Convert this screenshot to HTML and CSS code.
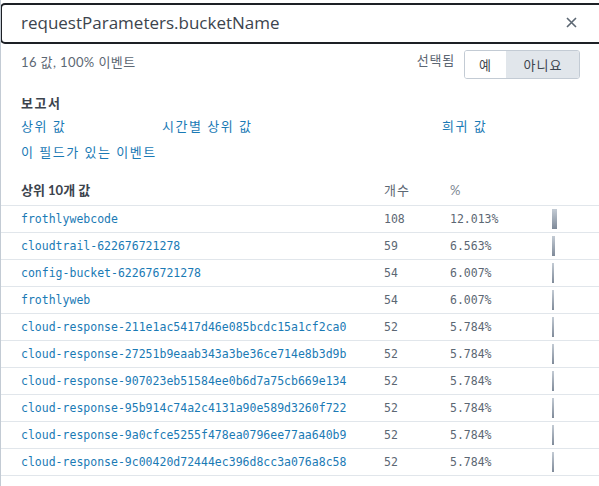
FILE: index.html
```html
<!DOCTYPE html>
<html lang="ko">
<head>
<meta charset="utf-8">
<title>requestParameters.bucketName</title>
<link rel="stylesheet" href="styles.css">
</head>
<body>
<div class="panel">
  <header class="title-bar">
    <h1 class="title">requestParameters.bucketName</h1>
    <span class="close" aria-label="닫기">
      <svg width="11" height="11" viewBox="0 0 11 11"><path d="M1 1L10 10M10 1L1 10" stroke="#5c6773" stroke-width="1.6" fill="none"/></svg>
    </span>
  </header>
  <div class="body">
    <div class="summary-row">
      <span class="stats">16 값, 100% 이벤트</span>
      <div class="selected">
        <span class="selected-label">선택됨</span>
        <div class="toggle">
          <span class="toggle-btn">예</span>
          <span class="toggle-btn active">아니요</span>
        </div>
      </div>
    </div>
    <section class="reports">
      <h2 class="reports-title">보고서</h2>
      <div class="report-links">
        <a class="link">상위 값</a>
        <a class="link">시간별 상위 값</a>
        <a class="link">희귀 값</a>
        <a class="link">이 필드가 있는 이벤트</a>
      </div>
    </section>
  </div>
  <table class="values">
    <thead>
      <tr>
        <th class="c-value">상위 10개 값</th>
        <th class="c-count">개수</th>
        <th class="c-pct">%</th>
        <th class="c-bar"></th>
      </tr>
    </thead>
    <tbody>
      <tr><td class="c-value">frothlywebcode</td><td class="c-count">108</td><td class="c-pct">12.013%</td><td class="c-bar"><span class="bar" style="width:5px"></span></td></tr>
      <tr><td class="c-value">cloudtrail-622676721278</td><td class="c-count">59</td><td class="c-pct">6.563%</td><td class="c-bar"><span class="bar" style="width:3px"></span></td></tr>
      <tr><td class="c-value">config-bucket-622676721278</td><td class="c-count">54</td><td class="c-pct">6.007%</td><td class="c-bar"><span class="bar" style="width:2px"></span></td></tr>
      <tr><td class="c-value">frothlyweb</td><td class="c-count">54</td><td class="c-pct">6.007%</td><td class="c-bar"><span class="bar" style="width:2px"></span></td></tr>
      <tr><td class="c-value">cloud-response-211e1ac5417d46e085bcdc15a1cf2ca0</td><td class="c-count">52</td><td class="c-pct">5.784%</td><td class="c-bar"><span class="bar" style="width:2px"></span></td></tr>
      <tr><td class="c-value">cloud-response-27251b9eaab343a3be36ce714e8b3d9b</td><td class="c-count">52</td><td class="c-pct">5.784%</td><td class="c-bar"><span class="bar" style="width:2px"></span></td></tr>
      <tr><td class="c-value">cloud-response-907023eb51584ee0b6d7a75cb669e134</td><td class="c-count">52</td><td class="c-pct">5.784%</td><td class="c-bar"><span class="bar" style="width:2px"></span></td></tr>
      <tr><td class="c-value">cloud-response-95b914c74a2c4131a90e589d3260f722</td><td class="c-count">52</td><td class="c-pct">5.784%</td><td class="c-bar"><span class="bar" style="width:2px"></span></td></tr>
      <tr><td class="c-value">cloud-response-9a0cfce5255f478ea0796ee77aa640b9</td><td class="c-count">52</td><td class="c-pct">5.784%</td><td class="c-bar"><span class="bar" style="width:2px"></span></td></tr>
      <tr><td class="c-value">cloud-response-9c00420d72444ec396d8cc3a076a8c58</td><td class="c-count">52</td><td class="c-pct">5.784%</td><td class="c-bar"><span class="bar" style="width:2px"></span></td></tr>
    </tbody>
  </table>
</div>
</body>
</html>
```
FILE: styles.css
```css
html, body {
  margin: 0;
  padding: 0;
  background: #ffffff;
}
body {
  font-family: Lato, "Noto Sans CJK KR", sans-serif;
  color: #3c444d;
  font-size: 13px;
  overflow: hidden;
}
.panel {
  width: 599px;
  height: 486px;
  padding-top: 3px;
  box-sizing: border-box;
  border-left: 1px solid #c3cbd4;
  overflow: hidden;
}
.title-bar {
  margin-left: -1px;
  width: 620px;
  height: 41px;
  box-sizing: border-box;
  border: 2px solid #1d2025;
  border-radius: 5px;
  display: flex;
  align-items: center;
  padding-left: 19px;
  padding-right: 40px;
}
.title {
  margin: 0 0 2px 0;
  font-family: "Open Sans", sans-serif;
  font-size: 17px;
  font-weight: 400;
  color: #3c444d;
  flex: 1;
}
.close {
  display: flex;
  margin-right: 1px;
  margin-bottom: 2px;
}
.body {
  padding: 0 19px 0 20px;
}
.summary-row {
  display: flex;
  justify-content: space-between;
  align-items: flex-start;
  height: 43px;
  padding-top: 6px;
}
.stats {
  margin-top: 2px;
  color: #5c6773;
  font-size: 13px;
  letter-spacing: 0.4px;
}
.selected {
  display: flex;
  align-items: flex-start;
  gap: 9px;
}
.selected-label {
  margin-top: 0;
  color: #5c6773;
  letter-spacing: 0.8px;
}
.toggle {
  display: flex;
  border: 1px solid #c3cbd4;
  border-radius: 3px;
  height: 27px;
  overflow: hidden;
}
.toggle-btn {
  display: flex;
  align-items: center;
  justify-content: center;
  color: #3c444d;
  background: #ffffff;
  width: 41px;
  letter-spacing: 1px;
}
.toggle-btn.active {
  background: #e1e6eb;
  width: 72px;
  border-left: 1px solid #e1e6eb;
}
.reports {
  margin-top: 0;
}
.reports-title {
  margin: 0;
  padding-top: 1px;
  font-size: 13px;
  font-weight: 700;
  color: #3c444d;
  line-height: 18px;
  letter-spacing: 1.5px;
}
.report-links {
  display: grid;
  grid-template-columns: 141px 280px 1fr;
  grid-auto-rows: 26px;
  align-items: center;
  margin-top: 0;
}
.link {
  color: #1a7ab5;
  font-size: 13px;
  letter-spacing: 1.5px;
  cursor: pointer;
}
.values {
  margin-top: 13px;
  width: 100%;
  border-collapse: collapse;
}
.values th {
  text-align: left;
  font-weight: 400;
  height: 25px;
  padding: 3px 0 0 0;
  vertical-align: top;
  border-bottom: 1px solid #e1e6eb;
}
.values th.c-value {
  font-weight: 700;
  color: #3c444d;
}
.values th.c-count {
  color: #5c6773;
  letter-spacing: 1px;
}
.values th.c-pct {
  color: #7d8791;
  height: 23px;
  padding-top: 5px;
}
.values td {
  height: 26px;
  padding: 0;
  border-bottom: 1px solid #e1e6eb;
  font-family: "DejaVu Sans Mono", monospace;
  font-size: 11.5px;
  color: #5c6773;
  white-space: nowrap;
}
.c-value {
  padding-left: 20px !important;
  width: 363px;
}
.values td.c-value {
  color: #1a7ab5;
}
.c-count {
  width: 66px;
}
.c-pct {
  width: 102px;
}
.c-bar {
  vertical-align: middle;
}
.bar {
  display: block;
  height: 20px;
  background: linear-gradient(#c3cbd4, #7f8a99);
}
```
